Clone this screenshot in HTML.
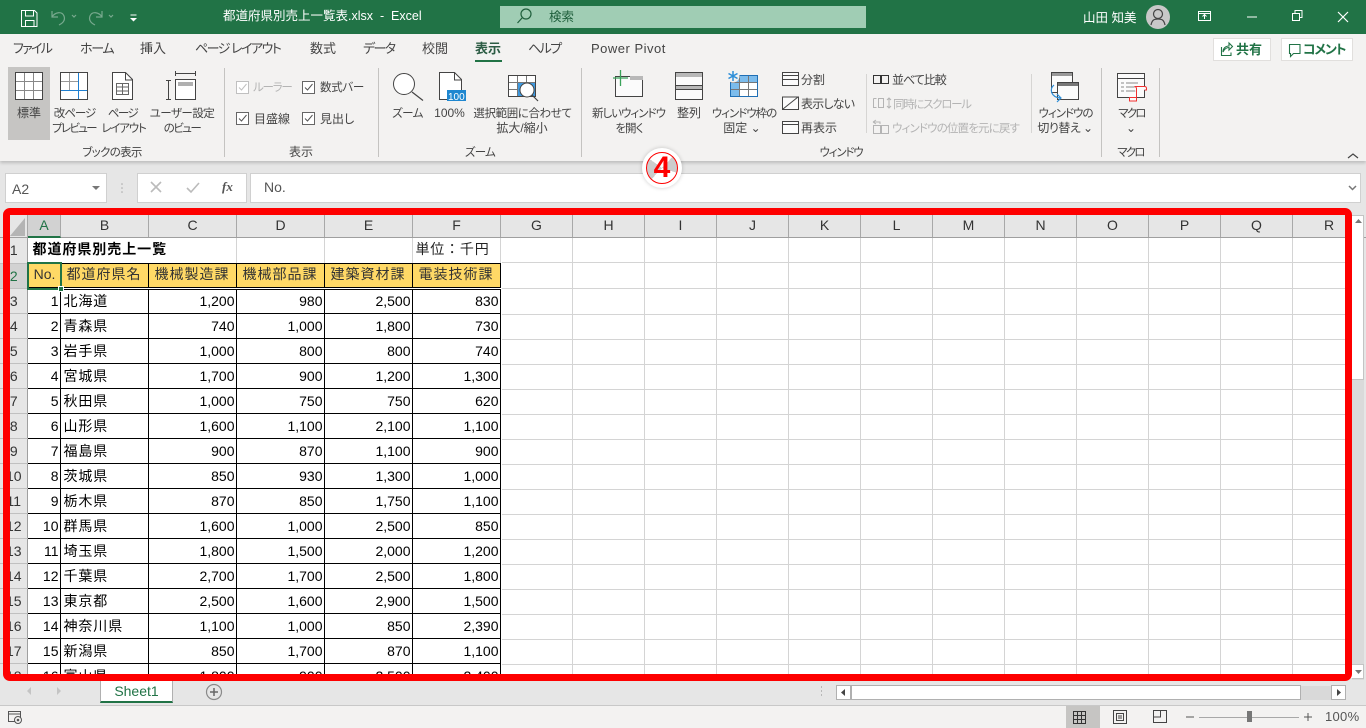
<!DOCTYPE html>
<html lang="ja"><head><meta charset="utf-8"><title>都道府県別売上一覧表.xlsx - Excel</title>
<style>
*{box-sizing:border-box}
html,body{margin:0;padding:0}
body{width:1366px;height:728px;overflow:hidden;position:relative;background:#e6e6e6;font-family:"Liberation Sans","Noto Sans CJK JP",sans-serif;color:#444;font-feature-settings:"palt"}
.a{position:absolute}
.t{position:absolute;white-space:nowrap;font-size:12px;line-height:16px;color:#444}
.s{font-size:11.5px;margin-top:1px}
.c{transform:translateX(-50%)}
.d{color:#b4b4b4}
.tab{position:absolute;top:41px;font-size:13px;line-height:16px;white-space:nowrap;color:#444}
.w{color:#fff}
svg{position:absolute;left:0;top:0;overflow:visible}
#hdr{position:absolute;left:0;top:215px;width:1366px;height:23px;background:#e6e6e6;border-bottom:1px solid #9f9f9f}
#hdr div{position:absolute;top:0;height:22px;line-height:21px;text-align:center;font-size:14px;color:#333;border-right:1px solid #a8a8a8}
#grid{position:absolute;left:501px;top:238px;width:860px;height:440px;background-color:#fff;
background-image:repeating-linear-gradient(to right,transparent 0,transparent 71px,#d4d4d4 71px,#d4d4d4 72px);}
#gridh{position:absolute;left:501px;top:314px;width:860px;height:360px;background-image:repeating-linear-gradient(to bottom,#d4d4d4 0,#d4d4d4 1px,transparent 1px,transparent 25px)}
#tw{position:absolute;left:0;top:238px;width:502px;height:438px;overflow:hidden;background:#fff}
table{border-collapse:collapse;table-layout:fixed;width:501px;margin-left:-1px;font-size:14px;color:#000}
td{padding:2px 3px 0;white-space:nowrap;overflow:visible;border:1px solid #000;height:25px;line-height:21px}
td.n{text-align:right;padding:2px 1px 0 0}
td.k{letter-spacing:.9px;font-size:14px}
td.r{background:#e6e6e6;border:0;border-bottom:1px solid #c0c0c0;border-right:1px solid #9f9f9f;text-align:center;padding:2px 0 0 2px;color:#333}
td.h{background:#ffd966;text-align:center;letter-spacing:1px;color:#333;padding:0 0 1px;height:25px;border-bottom:3px double #000}
td.o{border:0;border-right:1px solid #d4d4d4;border-bottom:1px solid #000;height:25px;padding-top:0;padding-bottom:2px}
tr:nth-child(3) td.n,tr:nth-child(3) td.k{padding-top:0}
tr:nth-child(3) td.r{padding-top:2px}
</style></head><body>

<!-- title bar -->
<div class="a" style="left:0;top:0;width:1366px;height:34px;background:#217346"></div>
<div class="a" style="left:500px;top:6px;width:366px;height:22px;background:#a0cdb4"></div>
<div class="t" style="left:549px;top:9px;color:#1f5f3c;font-size:12.5px">検索</div>
<div class="t w" style="left:223px;top:8px;font-size:12.5px">都道府県別売上一覧表.xlsx&nbsp; - &nbsp;Excel</div>
<div class="t w" style="left:1083px;top:10px;font-size:12.5px">山田 知美</div>

<!-- ribbon -->
<div class="a" style="left:0;top:34px;width:1366px;height:127px;background:#f3f2f1;box-shadow:0 2px 3px rgba(0,0,0,.18)"></div>
<div class="a" style="left:8px;top:67px;width:42px;height:73px;background:#c6c5c3"></div>
<div class="a" style="left:475px;top:60px;width:27px;height:2px;background:#217346"></div>

<div class="tab" style="left:13px;letter-spacing:-1.7px">ファイル</div>
<div class="tab" style="left:80px;letter-spacing:-1.3px">ホーム</div>
<div class="tab" style="left:140px">挿入</div>
<div class="tab" style="left:195px;letter-spacing:-1.5px">ページ レイアウト</div>
<div class="tab" style="left:310px">数式</div>
<div class="tab" style="left:363px;letter-spacing:-1.6px">データ</div>
<div class="tab" style="left:422px">校閲</div>
<div class="tab" style="left:475px;font-weight:700;color:#2c5c44">表示</div>
<div class="tab" style="left:528px;letter-spacing:-1.6px">ヘルプ</div>
<div class="tab" style="left:591px;letter-spacing:.5px">Power Pivot</div>

<div class="a" style="left:1213px;top:38px;width:58px;height:23px;background:#fff;border:1px solid #e1dfdd"></div>
<div class="t" style="left:1236px;top:42px;font-size:13px;font-weight:700;color:#217346">共有</div>
<div class="a" style="left:1281px;top:38px;width:72px;height:23px;background:#fff;border:1px solid #e1dfdd"></div>
<div class="t" style="left:1303px;top:42px;font-size:13px;font-weight:700;color:#217346;letter-spacing:-1.2px">コメント</div>

<!-- ribbon labels -->
<div class="t c" style="left:29px;top:105px">標準</div>
<div class="t c s" style="left:74.500px;top:105px;letter-spacing:-1px">改ページ</div>
<div class="t c s" style="left:74px;top:120px;letter-spacing:-1.700px">プレビュー</div>
<div class="t c s" style="left:122.500px;top:105px;letter-spacing:-1.500px">ページ</div>
<div class="t c s" style="left:123.500px;top:120px;letter-spacing:-1.200px">レイアウト</div>
<div class="t c s" style="left:182px;top:105px;letter-spacing:-.5px">ユーザー設定</div>
<div class="t c s" style="left:182px;top:120px;letter-spacing:-1.500px">のビュー</div>
<div class="t c s" style="left:112px;top:144px;letter-spacing:-.7px">ブックの表示</div>
<div class="t d s" style="left:253px;top:79px;letter-spacing:-1.200px">ルーラー</div>
<div class="t s" style="left:320px;top:79px;letter-spacing:-.3px">数式バー</div>
<div class="t" style="left:254px;top:111px">目盛線</div>
<div class="t" style="left:320px;top:111px">見出し</div>
<div class="t c" style="left:301px;top:144px">表示</div>
<div class="t c s" style="left:407.500px;top:105px;letter-spacing:-.5px">ズーム</div>
<div class="t c" style="left:449.500px;top:105px">100%</div>
<div class="t c s" style="left:522.500px;top:105px;letter-spacing:-.4px">選択範囲に合わせて</div>
<div class="t c" style="left:522px;top:120px">拡大/縮小</div>
<div class="t c s" style="left:480px;top:144px;letter-spacing:-.7px">ズーム</div>
<div class="t c s" style="left:628.500px;top:105px;letter-spacing:-1px">新しいウィンドウ</div>
<div class="t c s" style="left:629px;top:120px;letter-spacing:-.9px">を開く</div>
<div class="t c" style="left:689px;top:105px">整列</div>
<div class="t c s" style="left:744px;top:105px;letter-spacing:-1px">ウィンドウ枠の</div>
<div class="t c" style="left:742px;top:120px">固定 ⌄</div>
<div class="t" style="left:801px;top:72px">分割</div>
<div class="t" style="left:801px;top:96px;letter-spacing:-.8px">表示しない</div>
<div class="t" style="left:801px;top:120px">再表示</div>
<div class="t" style="left:892px;top:72px;letter-spacing:-1px">並べて比較</div>
<div class="t d s" style="left:893px;top:96px;letter-spacing:-1.300px">同時にスクロール</div>
<div class="t d s" style="left:892px;top:120px;letter-spacing:-.85px">ウィンドウの位置を元に戻す</div>
<div class="t c s" style="left:841px;top:144px;letter-spacing:-1.200px">ウィンドウ</div>
<div class="t c s" style="left:1065.500px;top:105px;letter-spacing:-1px">ウィンドウの</div>
<div class="t c" style="left:1065px;top:120px;letter-spacing:-.5px">切り替え ⌄</div>
<div class="t c s" style="left:1131.500px;top:105px;letter-spacing:-1.800px">マクロ</div>
<div class="t c" style="left:1131px;top:120px">⌄</div>
<div class="t c s" style="left:1130.500px;top:144px;letter-spacing:-1.800px">マクロ</div>

<!-- formula bar -->
<div class="a" style="left:5px;top:173px;width:102px;height:30px;background:#fff;border:1px solid #d0d0d0"></div>
<div class="t" style="left:12px;top:181px;font-size:14px;color:#555">A2</div>
<div class="a" style="left:137px;top:173px;width:110px;height:30px;background:#fff;border:1px solid #d0d0d0"></div>
<div class="a" style="left:250px;top:173px;width:1111px;height:30px;background:#fff;border:1px solid #d0d0d0"></div>
<div class="t" style="left:264px;top:179px;font-size:14px;color:#555">No.</div>
<div class="t" style="left:222px;top:179px;font:italic 700 13px 'Liberation Serif',serif;line-height:16px;color:#555">fx</div>

<!-- sheet -->
<div id="hdr">
<div style="left:0;width:28px;background:#e6e6e6"></div>
<div style="left:28px;width:33px;background:#d2d2d2;color:#217346;border-bottom:2px solid #217346;height:23px">A</div>
<div style="left:61px;width:88px">B</div><div style="left:149px;width:88px">C</div>
<div style="left:237px;width:88px">D</div><div style="left:325px;width:88px">E</div>
<div style="left:413px;width:88px">F</div><div style="left:501px;width:72px">G</div>
<div style="left:573px;width:72px">H</div><div style="left:645px;width:72px">I</div>
<div style="left:717px;width:72px">J</div><div style="left:789px;width:72px">K</div>
<div style="left:861px;width:72px">L</div><div style="left:933px;width:72px">M</div>
<div style="left:1005px;width:72px">N</div><div style="left:1077px;width:72px">O</div>
<div style="left:1149px;width:72px">P</div><div style="left:1221px;width:72px">Q</div>
<div style="left:1293px;width:72px;border:0">R</div>
</div>
<div id="grid"></div><div id="gridh"></div>
<div class="a" style="left:501px;top:262px;width:860px;height:1px;background:#d4d4d4"></div>
<div class="a" style="left:501px;top:288px;width:860px;height:1px;background:#d4d4d4"></div>

<div id="tw"><table>
<colgroup><col style="width:28px"><col style="width:33px"><col style="width:88px"><col style="width:88px"><col style="width:88px"><col style="width:88px"><col style="width:88px"></colgroup>
<tr><td class="r" style="padding-top:0">1</td><td class="o" colspan="2" style="font-weight:700;padding-left:5px;letter-spacing:.95px;border-right:0;overflow:visible">都道府県別売上一覧</td><td class="o"></td><td class="o"></td><td class="o"></td><td class="o" style="padding-left:3px;letter-spacing:.8px;color:#222;font-feature-settings:normal">単位&#xFF1A;千円</td></tr>
<tr><td class="r" style="background:#d2d2d2;color:#217346;padding-top:1px">2</td><td class="h" style="letter-spacing:0;padding-left:2px">No.</td><td class="h">都道府県名</td><td class="h">機械製造課</td><td class="h">機械部品課</td><td class="h">建築資材課</td><td class="h">電装技術課</td></tr>
<tr><td class="r">3</td><td class="n">1</td><td class="k">北海道</td><td class="n">1,200</td><td class="n">980</td><td class="n">2,500</td><td class="n">830</td></tr>
<tr><td class="r">4</td><td class="n">2</td><td class="k">青森県</td><td class="n">740</td><td class="n">1,000</td><td class="n">1,800</td><td class="n">730</td></tr>
<tr><td class="r">5</td><td class="n">3</td><td class="k">岩手県</td><td class="n">1,000</td><td class="n">800</td><td class="n">800</td><td class="n">740</td></tr>
<tr><td class="r">6</td><td class="n">4</td><td class="k">宮城県</td><td class="n">1,700</td><td class="n">900</td><td class="n">1,200</td><td class="n">1,300</td></tr>
<tr><td class="r">7</td><td class="n">5</td><td class="k">秋田県</td><td class="n">1,000</td><td class="n">750</td><td class="n">750</td><td class="n">620</td></tr>
<tr><td class="r">8</td><td class="n">6</td><td class="k">山形県</td><td class="n">1,600</td><td class="n">1,100</td><td class="n">2,100</td><td class="n">1,100</td></tr>
<tr><td class="r">9</td><td class="n">7</td><td class="k">福島県</td><td class="n">900</td><td class="n">870</td><td class="n">1,100</td><td class="n">900</td></tr>
<tr><td class="r">10</td><td class="n">8</td><td class="k">茨城県</td><td class="n">850</td><td class="n">930</td><td class="n">1,300</td><td class="n">1,000</td></tr>
<tr><td class="r">11</td><td class="n">9</td><td class="k">栃木県</td><td class="n">870</td><td class="n">850</td><td class="n">1,750</td><td class="n">1,100</td></tr>
<tr><td class="r">12</td><td class="n">10</td><td class="k">群馬県</td><td class="n">1,600</td><td class="n">1,000</td><td class="n">2,500</td><td class="n">850</td></tr>
<tr><td class="r">13</td><td class="n">11</td><td class="k">埼玉県</td><td class="n">1,800</td><td class="n">1,500</td><td class="n">2,000</td><td class="n">1,200</td></tr>
<tr><td class="r">14</td><td class="n">12</td><td class="k">千葉県</td><td class="n">2,700</td><td class="n">1,700</td><td class="n">2,500</td><td class="n">1,800</td></tr>
<tr><td class="r">15</td><td class="n">13</td><td class="k">東京都</td><td class="n">2,500</td><td class="n">1,600</td><td class="n">2,900</td><td class="n">1,500</td></tr>
<tr><td class="r">16</td><td class="n">14</td><td class="k">神奈川県</td><td class="n">1,100</td><td class="n">1,000</td><td class="n">850</td><td class="n">2,390</td></tr>
<tr><td class="r">17</td><td class="n">15</td><td class="k">新潟県</td><td class="n">850</td><td class="n">1,700</td><td class="n">870</td><td class="n">1,100</td></tr>
<tr><td class="r">18</td><td class="n">16</td><td class="k">富山県</td><td class="n">1,800</td><td class="n">900</td><td class="n">2,500</td><td class="n">2,400</td></tr>
</table></div>
<div class="a" style="left:27px;top:262px;width:35px;height:28px;border:2px solid #217346"></div>
<div class="a" style="left:58px;top:286px;width:6px;height:6px;background:#217346;border:1px solid #fff"></div>

<!-- right scrollbar -->
<div class="a" style="left:1352px;top:215px;width:12px;height:465px;background:#dadada"></div>
<div class="a" style="left:1352px;top:215px;width:12px;height:165px;background:#fff;border:1px solid #c4c4c4;border-left:0"></div>
<div class="a" style="left:1352px;top:664px;width:12px;height:15px;background:#fff;border:1px solid #c4c4c4;border-left:0"></div>

<!-- bottom bar -->
<div class="a" style="left:0;top:681px;width:1366px;height:24px;background:#e6e6e6"></div>
<div class="a" style="left:100px;top:681px;width:73px;height:22px;background:#fff;border-left:1px solid #b0b0b0;border-right:1px solid #b0b0b0;border-bottom:2px solid #217346"></div>
<div class="t" style="left:100px;width:73px;text-align:center;top:683px;color:#217346;font-size:14px">Sheet1</div>
<div class="a" style="left:836px;top:685px;width:15px;height:15px;background:#fff;border:1px solid #b0b0b0"></div>
<div class="a" style="left:851px;top:685px;width:450px;height:15px;background:#fff;border:1px solid #b0b0b0"></div>
<div class="a" style="left:1301px;top:686px;width:30px;height:14px;background:#d9d9d9"></div>
<div class="a" style="left:1331px;top:685px;width:15px;height:15px;background:#fff;border:1px solid #b0b0b0"></div>

<!-- status bar -->
<div class="a" style="left:0;top:705px;width:1366px;height:23px;background:#f3f2f1;border-top:1px solid #c8c8c8"></div>
<div class="a" style="left:1066px;top:706px;width:34px;height:22px;background:#c6c5c3"></div>
<div class="t" style="left:1325px;top:709px;font-size:13px;color:#555;letter-spacing:.3px">100%</div>

<!-- icons -->
<svg width="1366" height="728" viewBox="0 0 1366 728" fill="none" stroke-width="1">
<!-- QAT -->
<g stroke="#fff"><path d="M21.500 10.500h13l2.500 2.500v13.500h-15.500z"/><path d="M25.500 10.500v5.500h8v-5.500M25.500 26.500v-6h8.500v6"/></g>
<g stroke="#78a98e" stroke-width="1.200"><path d="M52 11v6h6M52 17c3-5 10-6 12-1 1.500 4-1 7-5 9"/><path d="M102 11v6h-6M102 17c-3-5-10-6-12-1-1.500 4 1 7 5 9"/><path d="M72 15l2 2 2-2M109 15l2 2 2-2"/></g>
<path d="M130.500 15h6" stroke="#fff"/><path d="M130 18h7l-3.500 3.500z" fill="#fff"/>
<!-- search -->
<circle cx="526" cy="14" r="5" stroke="#1f5f3c" stroke-width="1.200"/><path d="M522 18l-4.500 5" stroke="#1f5f3c" stroke-width="1.200"/>
<!-- window controls -->
<circle cx="1158" cy="17" r="12" fill="#c8c8c8"/><circle cx="1158" cy="14" r="4.500" stroke="#444" stroke-width="1.200"/><path d="M1151 25c1-5 3-6 7-6s6 1 7 6" stroke="#444" stroke-width="1.200"/>
<g stroke="#fff"><path d="M1198.500 11.500h12v9h-12zM1198.500 13.500h12M1204.500 19v-4M1202.500 16.500l2-2 2 2"/><path d="M1247 17h10"/><path d="M1292.500 13.500h7v7h-7zM1295 13v-2.500h7v7h-2.500"/><path d="M1338 12l10 10M1348 12l-10 10" stroke-width="1.200"/></g>
<!-- share/comment -->
<g stroke="#217346" stroke-width="1.100"><path d="M1221.500 47v8.500h9.500v-3M1223 52c0-3.500 2.500-6 6-6v-3l3.500 3.500-3.500 3.500v-2.500c-2.500 0-4.500 1.500-6 4.500z"/><path d="M1289.500 44.500h10.500v9h-6.500l-3 3v-3h-1z"/></g>
<!-- dividers -->
<g stroke="#c4c3c1"><path d="M224.500 68v89M378.500 68v89M581.500 68v89M1101.500 68v89M1159.500 68v89"/><path d="M866.500 74v59M1031.500 74v59" stroke="#d6d5d3"/></g>
<!-- normal -->
<rect x="15.500" y="72.500" width="27" height="27" fill="#fff" stroke="#444"/>
<path d="M24.500 73v26M33.500 73v26M16 81.500h26M16 90.500h26" stroke="#888"/>
<!-- page break -->
<rect x="60.500" y="72.500" width="27" height="27" fill="#fff" stroke="#444"/>
<path d="M69.500 73v17M61 81.500h17" stroke="#999"/><path d="M78.500 73v26M61 90.500h26" stroke="#1f7fd0"/>
<!-- page layout -->
<path d="M112.500 72.500h13l7 7v20h-20z" fill="#fff" stroke="#444"/><path d="M125.500 73v7h7" stroke="#444"/><path d="M116.500 83.500h12v11h-12zM116.500 87h12M116.500 91h12M122.500 84v10" stroke="#666"/>
<!-- custom view -->
<path d="M175 73.500h21M175.500 71v5M195.500 71v5M168.500 80v19M166 80.500h5M166 99.500h5" stroke="#444"/>
<rect x="175.500" y="79.500" width="20" height="20" fill="#fff" stroke="#444"/><rect x="178" y="82" width="15" height="4" fill="#b0b0b0"/>
<!-- checkboxes -->
<g fill="#fff"><rect x="236.500" y="81.500" width="12" height="12" stroke="#c0c0c0"/><rect x="302.500" y="81.500" width="12" height="12" stroke="#666"/><rect x="236.500" y="112.500" width="12" height="12" stroke="#666"/><rect x="302.500" y="112.500" width="12" height="12" stroke="#666"/></g>
<path d="M239 87.500l2.500 2.500 5-6" stroke="#c0c0c0"/><g stroke="#555"><path d="M305 87.500l2.500 2.500 5-6M239 118.500l2.500 2.500 5-6M305 118.500l2.500 2.500 5-6"/></g>
<!-- zoom -->
<circle cx="404" cy="84" r="10.500" fill="#fff" stroke="#444"/><path d="M412 92l11 8.500" stroke="#444" stroke-width="1.200"/>
<path d="M439.500 72.500h15l7 7v20h-22z" fill="#fff" stroke="#444"/><path d="M454.500 73v7h7" stroke="#444"/>
<rect x="447" y="90" width="19" height="11" fill="#1f87d0"/>
<text x="448" y="100" font-size="10" fill="#fff" stroke="none" font-family="Liberation Sans, sans-serif">100</text>
<rect x="508.500" y="75.500" width="27" height="21" fill="#fff" stroke="#444"/><path d="M517.500 76v20M526.500 76v20M509 82.500h26M509 89.500h26" stroke="#777"/>
<rect x="518" y="83" width="17" height="13" fill="#3f9ae0"/><circle cx="527" cy="90" r="7" fill="#fff" stroke="#444"/><path d="M532 95l6 6" stroke="#444" stroke-width="1.200"/>
<!-- new window -->
<rect x="615.500" y="76.500" width="27" height="20" fill="#fbfbfb" stroke="#444"/><rect x="630" y="76" width="13" height="4" fill="#b8b8b8"/>
<path d="M613 78h15M620.500 70v16" stroke="#3aa35a" stroke-width="1.300"/>
<!-- arrange -->
<rect x="675.500" y="72.500" width="27" height="27" fill="#fbfbfb" stroke="#444"/><rect x="676" y="73" width="26" height="4" fill="#b8b8b8"/><rect x="676" y="86" width="26" height="4" fill="#b8b8b8"/><path d="M675 85.500h27M675 89.500h27" stroke="#444"/>
<!-- freeze -->
<rect x="730.500" y="75.500" width="27" height="21" fill="#fff" stroke="#1f6fb5"/><rect x="731" y="76" width="26" height="6" fill="#7cbcec"/><rect x="731" y="76" width="8" height="20" fill="#7cbcec"/>
<path d="M739.500 76v20M748.500 76v20M731 82.500h26M731 89.500h26" stroke="#777"/>
<circle cx="733" cy="76" r="6.500" fill="#f3f2f1"/>
<path d="M733 71v10M728.500 73.500l9 5M737.500 73.500l-9 5" stroke="#2d8ed8" stroke-width="1.500"/>
<!-- split etc -->
<rect x="782.500" y="72.500" width="16" height="13" fill="#fbfbfb" stroke="#444"/><path d="M783 75.500h15M783 79.500h15" stroke="#444"/>
<rect x="782.500" y="97" width="16" height="12.500" fill="#fbfbfb" stroke="#444"/><path d="M783 109l15-12" stroke="#444"/>
<rect x="782.500" y="121.500" width="16" height="12" fill="#fbfbfb" stroke="#444"/><path d="M783 124.500h15" stroke="#444"/>
<!-- side by side -->
<g stroke="#333"><path d="M873.500 75.500h7v8h-7zM881.500 75.500h7v8h-7z"/></g>
<g stroke="#b4b4b4"><path d="M873.500 98.500h3M873.500 98.500v9h3M883.500 98.500h-5v9h5zM889 98v10M887 100l2-2 2 2M887 106l2 2 2-2"/><path d="M873.500 125.500h7v8h-7zM881.500 125.500h7v8h-7zM873 122l3-2M873 122l3 2M873 122h7v2"/></g>
<!-- switch windows -->
<rect x="1051.500" y="72.500" width="21" height="20" fill="#fbfbfb" stroke="#444"/><rect x="1052" y="73" width="20" height="3" fill="#999"/>
<rect x="1057.500" y="82.500" width="21" height="17" fill="#fbfbfb" stroke="#444"/><rect x="1058" y="83" width="20" height="3" fill="#777"/>
<path d="M1054 85c-5 4-3 12 6 13M1057 94l4 4-4 4" stroke="#2d8ed8" stroke-width="1.200"/>
<!-- macro -->
<rect x="1117.500" y="73.500" width="27" height="24" fill="#fbfbfb" stroke="#444"/><path d="M1117 78.500h28" stroke="#444"/><path d="M1121 83h3M1126 83h12M1121 87h3M1126 87h10M1121 91h3M1126 91h10" stroke="#888"/>
<path d="M1134.500 86.500h10c1.500 0 2 1 2 2v1.500h-2M1134.500 86.500c1 0 2 1 2 2v12.500h-7v-3.500h7" fill="#fbfbfb" stroke="#f03030"/>
<!-- collapse -->
<path d="M1348 158l5-4 5 4" stroke="#444" stroke-width="1.200"/>
<!-- namebox arrows -->
<path d="M92 186h8l-4 4z" fill="#777"/><circle cx="122" cy="184" r=".8" fill="#aaa"/><circle cx="122" cy="188" r=".8" fill="#aaa"/><circle cx="122" cy="192" r=".8" fill="#aaa"/>
<path d="M151 182l10 10M161 182l-10 10" stroke="#bbb" stroke-width="1.600"/><path d="M187 188l4 4 8-9" stroke="#bbb" stroke-width="1.600"/>
<path d="M1349 186l3.500 3.500 3.500-3.500" stroke="#777" stroke-width="1.500"/>
<!-- header corner -->
<path d="M25 218v18h-15z" fill="#b4b4b4"/>
<!-- scroll arrows -->
<path d="M1355 223l3.500-4 3.500 4z" fill="#777"/><path d="M1355 670l3.500 4 3.500-4z" fill="#777"/>
<!-- sheet nav -->
<path d="M31 687v8l-4-4z" fill="#c4c4c4"/><path d="M57 687v8l4-4z" fill="#c4c4c4"/>
<circle cx="214" cy="692" r="7.500" stroke="#8a8a8a" stroke-width="1.200"/><path d="M214 688v8M210 692h8" stroke="#666" stroke-width="1.500"/>
<path d="M821 687h1M821 691h1M821 695h1" stroke="#888"/>
<path d="M845 689v7l-4-3.500z" fill="#444"/><path d="M1337 689v7l4-3.500z" fill="#444"/>
<!-- status -->
<path d="M8.500 711.500h12v10h-12zM8.500 714h12" stroke="#555"/><circle cx="18" cy="720" r="3.500" fill="#f3f2f1" stroke="#555"/><circle cx="18" cy="720" r="1.300" fill="#555"/>
<rect x="1073.500" y="711.500" width="12" height="12" stroke="#333"/><path d="M1077.500 712v11M1081.500 712v11M1074 715.500h11M1074 719.500h11" stroke="#333"/>
<rect x="1113.500" y="710.500" width="13" height="13" stroke="#444"/><rect x="1116.500" y="713.500" width="7" height="7" stroke="#444"/><path d="M1118 716h4M1118 718h4" stroke="#444"/>
<path d="M1153.500 710.500h13v12h-13zM1160.500 711v6h-7" stroke="#444"/>
<path d="M1186 717h8M1304 717h8M1308 713v8" stroke="#555"/>
<path d="M1199 717.500h100" stroke="#a8a8a8"/><rect x="1247" y="711" width="5" height="11" fill="#777"/>
</svg>

<!-- red frame -->
<div class="a" style="left:3px;top:208px;width:1349px;height:473px;border:7px solid #fe0000;border-radius:7px"></div>

<!-- circled 4 -->
<div class="a" style="left:642px;top:148px;width:40px;height:40px;border-radius:50%;background:#fff;box-shadow:0 0 4px rgba(0,0,0,.2)"></div>
<div class="a" style="left:646px;top:152px;width:32px;height:32px;border-radius:50%;border:1px solid #fe0000;background:conic-gradient(#fff 0 12%,#ccc 12% 30%,#fff 30% 62%,#ccc 62% 85%,#fff 85%)"></div>
<div class="t" style="left:642px;width:40px;text-align:center;top:153px;font-size:30px;line-height:30px;font-weight:700;color:#fe0000">4</div>
</body></html>
